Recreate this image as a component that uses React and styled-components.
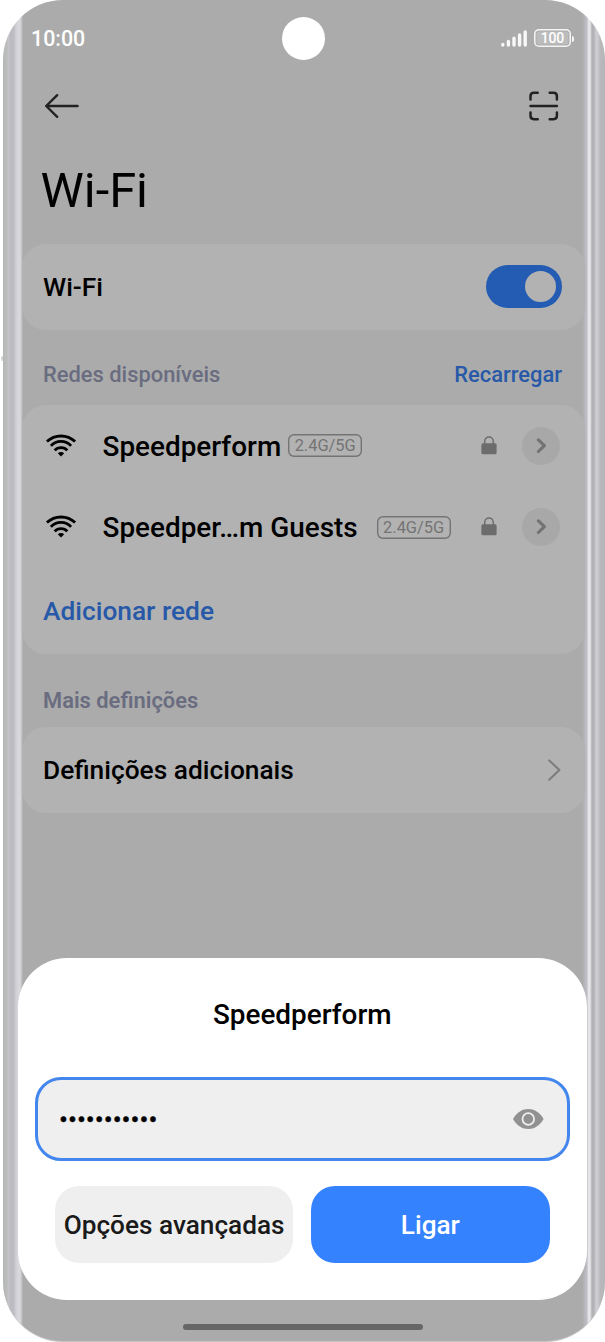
import styled, { createGlobalStyle } from "styled-components";

const GlobalStyle = createGlobalStyle`
  * {
    box-sizing: border-box;
  }

  body {
    margin: 0;
    background: #fff;
    font-family: Roboto, sans-serif;
    color: #000;
  }

  button {
    font-family: inherit;
    border: none;
    padding: 0;
    background: none;
  }

  svg {
    display: block;
    flex-shrink: 0;
  }
`;

const Device = styled.div`
  display: flex;
  width: 605px;
  height: 1342px;
  padding-left: 1px;
`;

const SideKey = styled.span`
  width: 2px;
  height: 5px;
  margin-top: 356px;
  border-radius: 2px 0 0 2px;
  background: #d2d2d2;
`;

const Phone = styled.div`
  display: flex;
  flex-direction: column;
  width: 602px;
  border-radius: 60px;
  overflow: hidden;
  border-bottom: 1px solid #c4c4c4;
  background: linear-gradient(
    90deg,
    #b4b5b5 0,
    #bcbdbe 4px,
    #c4c4c8 5.5px,
    #b9b9bf 8px,
    #bebec4 11px,
    #cfcfd4 13px,
    #dadade 16px,
    #d4d4d8 17.5px,
    #ababab 20px,
    #ababab 579px,
    #b7b7be 582px,
    #bfbfc5 584px,
    #e6e6ea 585.5px,
    #e6e6ea 587px,
    #b2b2b5 589px,
    #b4b4b8 591px,
    #cfcfd3 593px,
    #cbcbcf 595px,
    #b9b9bc 597px,
    #b5b5b7 602px
  );
`;

const Screen = styled.main`
  flex: 1;
  padding: 0 20px 0 19px;
`;

const StatusBar = styled.header`
  display: grid;
  grid-template-columns: 1fr auto 1fr;
  align-items: center;
  height: 77px;
  padding: 0 10px 0 9px;
  color: #fff;
`;

const Clock = styled.span`
  font-size: 21.4px;
  font-weight: 500;
`;

const Camera = styled.span`
  width: 43px;
  height: 43px;
  border-radius: 50%;
  background: #fff;
`;

const StatusIcons = styled.div`
  display: flex;
  justify-content: flex-end;
  align-items: center;
  gap: 7px;
  margin-right: 1px;
`;

const Battery = styled.span`
  display: flex;
  align-items: center;
  gap: 1px;

  &::after {
    content: "";
    width: 2px;
    height: 6px;
    border-radius: 0 2px 2px 0;
    background: #f4f4f4;
  }
`;

const BatteryLevel = styled.span`
  width: 37px;
  height: 18px;
  margin-top: -1px;
  border-radius: 5px;
  box-shadow: inset 0 0 0 1.5px #f4f4f4, inset 0 0 0 2.5px #ababab;
  background: #bcbcbc;
  font-size: 14px;
  font-weight: 500;
  letter-spacing: -0.2px;
  line-height: 19px;
  text-align: center;
`;

const NavBar = styled.nav`
  display: flex;
  justify-content: space-between;
  align-items: center;
  height: 58px;
  padding: 0 26px 0 22px;
`;

const Title = styled.h1`
  height: 109px;
  margin: 0;
  padding: 27px 0 0 18.5px;
  font-size: 48.8px;
  font-weight: 400;
  line-height: 58px;
`;

const Card = styled.section`
  border-radius: 24px;
  background: #b2b2b2;
`;

const Row = styled.div`
  display: flex;
  align-items: center;
  height: ${(props) => props.$height}px;
  padding: 0 23px 0 21px;
`;

const Label = styled.span`
  font-size: 26.3px;
  font-weight: 500;
`;

const SectionHead = styled.div`
  display: flex;
  justify-content: space-between;
  align-items: center;
  height: ${(props) => props.$height}px;
  padding: ${(props) => props.$top}px 23px 0 21px;
`;

const SectionTitle = styled.h2`
  margin: 0;
  font-size: 21.9px;
  font-weight: ${(props) => props.$weight};
  color: #6a6c80;
`;

const TextButton = styled.button`
  font-size: ${(props) => props.$size}px;
  font-weight: 500;
  color: #2759a8;
`;

const Toggle = styled.button`
  display: flex;
  justify-content: flex-end;
  align-items: center;
  width: 76px;
  height: 43px;
  margin: -1px 0 0 auto;
  padding-right: 6px;
  border-radius: 22px;
  background: #245cb3;

  &::after {
    content: "";
    width: 31px;
    height: 31px;
    border-radius: 50%;
    background: #b2b2b2;
  }
`;

const NetworkName = styled.span`
  margin-left: 23.5px;
  padding-top: 1px;
  font-size: 27.9px;
  font-weight: 500;
  white-space: nowrap;
`;

const Band = styled.span`
  width: 74px;
  height: 23px;
  margin-left: ${(props) => props.$gap}px;
  border-radius: 6px;
  box-shadow: inset 0 0 0 1.4px #747474;
  font-size: 16.4px;
  line-height: 23px;
  text-align: center;
  color: #747474;
`;

const RowEnd = styled.div`
  display: flex;
  align-items: center;
  gap: 25px;
  margin-left: auto;
  padding-right: ${(props) => props.$inset || 0}px;
`;

const Details = styled.button`
  display: grid;
  place-items: center;
  width: 38px;
  height: 38px;
  border-radius: 50%;
  background: #a8a8a8;
`;

const Sheet = styled.section`
  height: 342px;
  margin: 0 18.5px 0 15px;
  padding: 0 17px;
  border-radius: 49px;
  background: #fff;
`;

const SheetTitle = styled.h2`
  margin: 0;
  height: 119px;
  padding-top: 41px;
  font-size: 27.9px;
  font-weight: 500;
  line-height: 32px;
  text-align: center;
`;

const Field = styled.label`
  display: flex;
  justify-content: space-between;
  align-items: center;
  height: 84px;
  padding: 0 23px 0 21px;
  border: 3px solid #4286ee;
  border-radius: 26px;
  background: #efefef;
`;

const Password = styled.span`
  font-size: 26.5px;
  -webkit-text-stroke: 0.4px #000;
`;

const Actions = styled.div`
  display: grid;
  grid-template-columns: 1fr 1fr;
  gap: 18px;
  padding: 25px 20px 0;
`;

const Button = styled.button`
  height: 77px;
  border-radius: 24px;
  font-size: 26.2px;
  font-weight: 500;
  white-space: nowrap;
  color: ${(props) => (props.$primary ? "#fff" : "#1a1a1a")};
  background: ${(props) => (props.$primary ? "#3582ff" : "#efefef")};
`;

const HomeBar = styled.footer`
  display: flex;
  justify-content: center;
  height: 41px;
  padding-top: 24px;

  &::after {
    content: "";
    width: 240px;
    height: 6px;
    margin-right: 3px;
    border-radius: 3px;
    background: #666;
  }
`;

const networks = [
  { name: "Speedperform", gap: 7 },
  { name: "Speedper…m Guests", gap: 19 },
];

function SignalIcon() {
  return (
    <svg width="26" height="17" viewBox="0 0 26 17" stroke="#f8f8f8" strokeWidth="3.4" strokeLinecap="round">
      <path d="M1.8 15V14.4M7.4 15V11.4M13 15V8.2M18.6 15V5M24.2 15V1.9" />
    </svg>
  );
}

function BackIcon() {
  return (
    <svg width="36" height="26" viewBox="0 0 36 26" fill="none" stroke="#222" strokeWidth="2.4" strokeLinecap="round" strokeLinejoin="round">
      <path d="M33.6 13H2.2M13.2 2.2L2.2 13L13.2 23.8" />
    </svg>
  );
}

function ScanIcon() {
  return (
    <svg width="30" height="30" viewBox="0 0 30 30" fill="none" stroke="#222" strokeWidth="2.5" strokeLinecap="round">
      <path d="M1.5 8.5V5.2Q1.5 1.8 4.9 1.8H8.7M20.7 1.8H24.5Q27.9 1.8 27.9 5.2V8.5M27.9 21.5V24.8Q27.9 28.2 24.5 28.2H20.7M8.7 28.2H4.9Q1.5 28.2 1.5 24.8V21.5M1.5 15H27.9" />
    </svg>
  );
}

function WifiIcon() {
  return (
    <svg width="36" height="24" viewBox="-2 0 36 24" fill="none" stroke="#000" strokeWidth="2.8">
      <path d="M1.9 7.6A20.5 20.5 0 0 1 30.1 7.6M5.9 11.9A13.6 13.6 0 0 1 26.1 11.9M9.7 16.4A8.4 8.4 0 0 1 22.3 16.4" />
      <path d="M12.8 19.2Q16 16.8 19.2 19.2L16 22.4Z" fill="#000" stroke="none" />
    </svg>
  );
}

function LockIcon() {
  return (
    <svg width="16" height="20" viewBox="0 0 16 20">
      <path d="M3.7 8V5.4a4.3 4.3 0 0 1 8.6 0V8" fill="none" stroke="#6c6c6c" strokeWidth="1.5" />
      <rect x="0.4" y="7.2" width="15.2" height="11" rx="1.5" fill="#6c6c6c" />
    </svg>
  );
}

function SmallChevron() {
  return (
    <svg width="10" height="16" viewBox="0 0 10 16" fill="none" stroke="#737373" strokeWidth="3.1" strokeLinecap="round" strokeLinejoin="round">
      <path d="M2.4 1.9L8.4 7.7L2.4 13.5" />
    </svg>
  );
}

function ChevronIcon() {
  return (
    <svg width="14" height="23" viewBox="0 0 14 23" fill="none" stroke="#7c7c7c" strokeWidth="2" strokeLinecap="round" strokeLinejoin="round">
      <path d="M1.2 1.4L11.4 11L1.2 20.8" />
    </svg>
  );
}

function EyeIcon() {
  return (
    <svg width="31" height="21" viewBox="0 0 31 21">
      <path d="M0 10C4 3.2 9.5 0 15.3 0S26.6 3.2 30.6 10C26.6 16.8 21.1 20 15.3 20S4 16.8 0 10Z" fill="#919191" />
      <circle cx="15.3" cy="10" r="5.8" fill="none" stroke="#efefef" strokeWidth="1.8" />
    </svg>
  );
}

function Network({ name, gap }) {
  return (
    <Row $height={81.5}>
      <WifiIcon />
      <NetworkName>{name}</NetworkName>
      <Band $gap={gap}>2.4G/5G</Band>
      <RowEnd $inset={2}>
        <LockIcon />
        <Details>
          <SmallChevron />
        </Details>
      </RowEnd>
    </Row>
  );
}

function App() {
  return (
    <>
      <GlobalStyle />
      <Device>
        <SideKey />
        <Phone>
          <Screen>
            <StatusBar>
              <Clock>10:00</Clock>
              <Camera />
              <StatusIcons>
                <SignalIcon />
                <Battery>
                  <BatteryLevel>100</BatteryLevel>
                </Battery>
              </StatusIcons>
            </StatusBar>
            <NavBar>
              <BackIcon />
              <ScanIcon />
            </NavBar>
            <Title>Wi-Fi</Title>
            <Card>
              <Row $height={86}>
                <Label>Wi-Fi</Label>
                <Toggle />
              </Row>
            </Card>
            <SectionHead $height={75} $top={14}>
              <SectionTitle $weight={500}>Redes disponíveis</SectionTitle>
              <TextButton $size={21.9}>Recarregar</TextButton>
            </SectionHead>
            <Card>
              {networks.map((network) => (
                <Network key={network.name} {...network} />
              ))}
              <Row $height={86}>
                <TextButton $size={26.3}>Adicionar rede</TextButton>
              </Row>
            </Card>
            <SectionHead $height={73} $top={20}>
              <SectionTitle $weight={600}>Mais definições</SectionTitle>
            </SectionHead>
            <Card>
              <Row $height={86}>
                <Label>Definições adicionais</Label>
                <RowEnd>
                  <ChevronIcon />
                </RowEnd>
              </Row>
            </Card>
          </Screen>
          <Sheet>
            <SheetTitle>Speedperform</SheetTitle>
            <Field>
              <Password>•••••••••••</Password>
              <EyeIcon />
            </Field>
            <Actions>
              <Button>Opções avançadas</Button>
              <Button $primary>Ligar</Button>
            </Actions>
          </Sheet>
          <HomeBar />
        </Phone>
      </Device>
    </>
  );
}

export default App;
